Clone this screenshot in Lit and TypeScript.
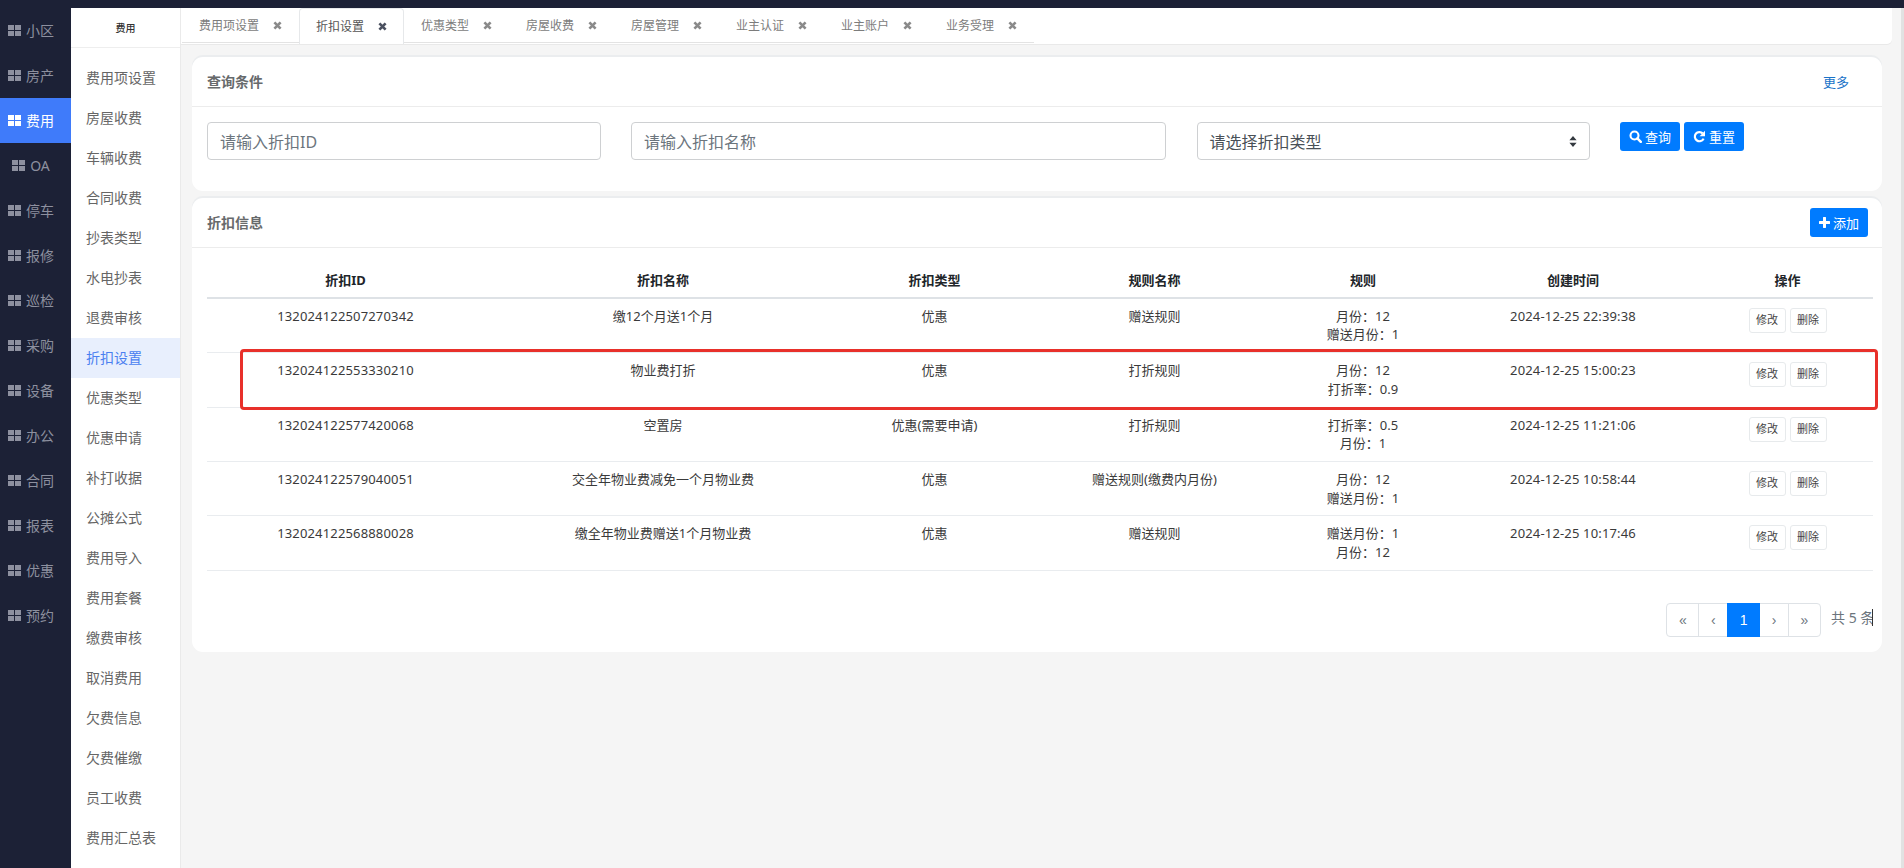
import { LitElement, html, css, svg } from "lit";
import { customElement } from "lit/decorators.js";

const NAV = ["小区","房产","费用","OA","停车","报修","巡检","采购","设备","办公","合同","报表","优惠","预约"];
const SUB = ["费用项设置","房屋收费","车辆收费","合同收费","抄表类型","水电抄表","退费审核","折扣设置","优惠类型","优惠申请","补打收据","公摊公式","费用导入","费用套餐","缴费审核","取消费用","欠费信息","欠费催缴","员工收费","费用汇总表"];
const TABS = ["费用项设置","折扣设置","优惠类型","房屋收费","房屋管理","业主认证","业主账户","业务受理"];
const HEAD = ["折扣ID","折扣名称","折扣类型","规则名称","规则","创建时间","操作"];
const ROWS = [
  ["132024122507270342","缴12个月送1个月","优惠","赠送规则",["月份：12","赠送月份：1"],"2024-12-25 22:39:38"],
  ["132024122553330210","物业费打折","优惠","打折规则",["月份：12","打折率：0.9"],"2024-12-25 15:00:23"],
  ["132024122577420068","空置房","优惠(需要申请)","打折规则",["打折率：0.5","月份：1"],"2024-12-25 11:21:06"],
  ["132024122579040051","交全年物业费减免一个月物业费","优惠","赠送规则(缴费内月份)",["月份：12","赠送月份：1"],"2024-12-25 10:58:44"],
  ["132024122568880028","缴全年物业费赠送1个月物业费","优惠","赠送规则",["赠送月份：1","月份：12"],"2024-12-25 10:17:46"],
] as const;

const thLarge = svg`<svg class="th" viewBox="0 0 13 11" width="13" height="11"><path fill="currentColor" d="M0 0h6v5H0zM7 0h6v5H7zM0 6h6v5H0zM7 6h6v5H7z"/></svg>`;
const times = svg`<svg class="x" viewBox="0 0 9 9" width="9" height="9"><path d="M1.4 1.4l6.2 6.2M7.6 1.4L1.4 7.6" fill="none" stroke="currentColor" stroke-width="2.7"/></svg>`;
const search = svg`<svg viewBox="0 0 13 13" width="13" height="13"><circle cx="5.5" cy="5.5" r="4" fill="none" stroke="#fff" stroke-width="2.1"/><path d="M8.4 8.4l3.4 3.4" stroke="#fff" stroke-width="2.5" stroke-linecap="round"/></svg>`;
const refresh = svg`<svg viewBox="0 0 13 13" width="13" height="13"><path d="M10.6 8.6A4.6 4.6 0 1 1 9.7 3.4" fill="none" stroke="#fff" stroke-width="2.2"/><path d="M12 .8V6.2H6.6z" fill="#fff"/></svg>`;
const plus = svg`<svg viewBox="0 0 11 11" width="11" height="11"><path d="M5.5 1v9M1 5.5h9" stroke="#fff" stroke-width="3" stroke-linecap="round"/></svg>`;
const updown = svg`<svg viewBox="0 0 8 11" width="8" height="11"><path d="M4 0l3.6 4.2H.4zM4 11L.4 6.8h7.2z" fill="#343a40"/></svg>`;

@customElement("app-root")
export class AppRoot extends LitElement {
  static styles = css`
    :host {
      display: block; position: relative; width: 1904px; height: 868px; overflow: hidden;
      background: #f5f5f5; color: #333;
      font-family: "Noto Sans", "Noto Sans CJK SC", sans-serif; font-size: 13px;
    }
    * { box-sizing: border-box; }
    .top { height: 8px; background: #1c2136; }
    .frame { display: flex; height: 860px; }

    .nav { width: 71px; flex: none; background: #1c2136; }
    .nav-item {
      height: 45px; display: flex; align-items: center; justify-content: center; gap: 5px;
      padding: 0 9px 1px 0; color: #8d909f; font-size: 14px;
    }
    .nav-item.on { background: #3f7bfa; color: #fff; }

    .sub { width: 110px; flex: none; background: #fff; border-right: 1px solid #eaeaea; }
    .sub-head {
      height: 40px; border-bottom: 1px solid #eee; margin-bottom: 10px;
      display: flex; align-items: center; justify-content: center;
      font-size: 10px; font-weight: 500; color: #333;
    }
    .sub-item {
      height: 40px; display: flex; align-items: center; padding: 0 0 2px 15px;
      font-size: 14px; color: #666;
    }
    .sub-item.on { background: #e8effd; color: #4a7ff0; }

    .main { flex: 1; min-width: 0; }
    .tabs {
      width: 1711px; height: 36px; background: #fff; display: flex; padding-left: 1px;
      border-bottom-right-radius: 5px; box-shadow: 0 1px 0 #e9e9e9;
    }
    .tab {
      width: 105px; height: 35px; display: flex; align-items: center; gap: 14px;
      padding-left: 17px; font-size: 12px; color: #7c7c7c;
      border-bottom: 1px solid #e3e3e3; white-space: nowrap;
    }
    .tab:first-child { width: 117px; }
    .tab.on {
      height: 36px; color: #555; border: 1px solid #e6e8ea; border-bottom: 0;
      border-radius: 4px 4px 0 0; padding-left: 16px; padding-bottom: 1px;
    }
    .x { color: #8a8a8a; flex: none; }
    .tab.on .x { color: #4b5160; }

    .content { padding: 13px 0 0 11px; width: 1701px; }
    .card { background: #fff; border-radius: 11px; box-shadow: 0 -2px 0 #ebedef; }
    .card + .card { margin-top: 7px; }
    .card-head {
      height: 50px; border-bottom: 1px solid #ececec; padding: 0 14px 1px 15px;
      display: flex; align-items: center; justify-content: space-between;
    }
    .title { font-size: 14px; font-weight: 600; color: #676a6c; }
    .more { color: #1a73c8; font-size: 13px; margin-right: 19px; }

    .search {
      display: grid; grid-template-columns: 393.5px 535px 393px auto; column-gap: 30.5px;
      padding: 15px 15px 31px; align-items: start;
    }
    .field {
      height: 38px; border: 1px solid #ced0d2; border-radius: 4px; padding: 0 12px;
      display: flex; align-items: center; justify-content: space-between;
      font-size: 16px; color: #6c757d;
    }
    .field.select { color: #495057; }
    .btns { display: flex; gap: 4px; }
    .btn {
      height: 29px; display: flex; align-items: center; gap: 3px; padding: 0 9px;
      background: #007bff; color: #fff; border-radius: 3px; font-size: 13px;
    }

    .body { padding: 15px 9px 15px 15px; }
    table { width: 1666px; border-collapse: collapse; table-layout: fixed; }
    th, td { text-align: center; vertical-align: top; line-height: 18.7px; padding: 8px 4px; }
    th { font-size: 13px; font-weight: 700; color: #212529; padding-bottom: 7px; border-bottom: 2px solid #dee2e6; }
    td { color: #3a3a3a; border-bottom: 1px solid #e9ecef; }
    th:nth-child(1) { width: 277px; }
    th:nth-child(2) { width: 358px; }
    th:nth-child(3) { width: 185px; }
    th:nth-child(4) { width: 255px; }
    th:nth-child(5) { width: 162px; }
    th:nth-child(6) { width: 258px; }
    th:nth-child(7) { width: 171px; }
    .nums { letter-spacing: 0.16px; }
    .line { display: block; }
    td.ops { padding: 9px 4px 7px; }
    .ops-row { display: flex; justify-content: center; gap: 4px; }
    .op {
      width: 37px; height: 25px; border: 1px solid #e7eaec; border-radius: 3px;
      display: flex; align-items: center; justify-content: center; font-size: 11px; color: #444;
    }

    .foot { display: flex; justify-content: flex-end; gap: 10px; margin-top: 32px; }
    .pager { display: flex; font-family: "Liberation Sans", sans-serif; font-size: 14px; color: #6c757d; }
    .page {
      height: 34px; padding: 0 11.6px; display: flex; align-items: center; justify-content: center;
      border: 1px solid #dee2e6; margin-left: -1px; background: #fff; font-size: 14px;
    }
    .page:first-child { margin-left: 0; border-radius: 4px 0 0 4px; }
    .page:last-child { border-radius: 0 4px 4px 0; }
    .page.on { background: #007bff; border-color: #007bff; color: #fff; position: relative; }
    .count {
      width: 42px; height: 34px; overflow: hidden; white-space: nowrap; position: relative;
      font-size: 14px; line-height: 30px; color: #6c757d; word-spacing: 0;
    }
    .caret { position: absolute; right: 0; top: 6px; width: 1px; height: 17px; background: #333; }

    .mark {
      position: absolute; left: 240px; top: 349px; width: 1638px; height: 61px;
      border: 3px solid #e8302a; border-radius: 4px; pointer-events: none;
    }
    .edge { position: absolute; right: 0; top: 8px; bottom: 0; width: 3px; background: #e2e2e2; }
  `;

  render() {
    return html`
      <div class="top"></div>
      <div class="frame">
        <div class="nav">
          ${NAV.map((n) => html`<div class="nav-item ${n === "费用" ? "on" : ""}">${thLarge}<span>${n}</span></div>`)}
        </div>
        <div class="sub">
          <div class="sub-head">费用</div>
          ${SUB.map((n) => html`<div class="sub-item ${n === "折扣设置" ? "on" : ""}">${n}</div>`)}
        </div>
        <div class="main">
          <div class="tabs">
            ${TABS.map((t) => html`<div class="tab ${t === "折扣设置" ? "on" : ""}"><span>${t}</span>${times}</div>`)}
          </div>
          <div class="content">
            <section class="card">
              <div class="card-head"><span class="title">查询条件</span><span class="more">更多</span></div>
              <div class="search">
                <div class="field">请输入折扣ID</div>
                <div class="field">请输入折扣名称</div>
                <div class="field select"><span>请选择折扣类型</span>${updown}</div>
                <div class="btns">
                  <div class="btn">${search}<span>查询</span></div>
                  <div class="btn">${refresh}<span>重置</span></div>
                </div>
              </div>
            </section>
            <section class="card">
              <div class="card-head"><span class="title">折扣信息</span><div class="btn">${plus}<span>添加</span></div></div>
              <div class="body">
                <table>
                  <thead><tr>${HEAD.map((h) => html`<th>${h}</th>`)}</tr></thead>
                  <tbody>
                    ${ROWS.map((r) => html`<tr>
                      <td class="nums">${r[0]}</td>
                      <td>${r[1]}</td>
                      <td>${r[2]}</td>
                      <td>${r[3]}</td>
                      <td>${r[4].map((l) => html`<span class="line">${l}</span>`)}</td>
                      <td class="nums">${r[5]}</td>
                      <td class="ops"><div class="ops-row"><div class="op">修改</div><div class="op">删除</div></div></td>
                    </tr>`)}
                  </tbody>
                </table>
                <div class="foot">
                  <div class="pager">
                    <div class="page">«</div><div class="page">‹</div><div class="page on">1</div><div class="page">›</div><div class="page">»</div>
                  </div>
                  <div class="count">共 5 条<i class="caret"></i></div>
                </div>
              </div>
            </section>
          </div>
        </div>
      </div>
      <div class="mark"></div>
      <div class="edge"></div>
    `;
  }
}
